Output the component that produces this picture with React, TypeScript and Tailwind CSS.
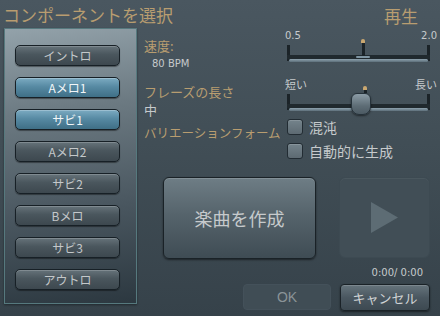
import React from "react"

const sections = [
  { label: "イントロ", active: false },
  { label: "Aメロ1", active: true },
  { label: "サビ1", active: true },
  { label: "Aメロ2", active: false },
  { label: "サビ2", active: false },
  { label: "Bメロ", active: false },
  { label: "サビ3", active: false },
  { label: "アウトロ", active: false },
]

const jp = "font-['Noto_Sans_CJK_JP','Noto_Sans',sans-serif]"
const num = "font-['DejaVu_Sans','Liberation_Sans',sans-serif]"

function SectionButton({ label, active }: { label: string; active: boolean }) {
  return (
    <button
      className={
        active
          ? "flex h-[21px] w-[105px] items-center justify-center rounded-[5px] border border-[#172026] bg-[linear-gradient(to_bottom,#7cabc2,#578aa3_45%,#3f6f86)] text-[12px] leading-none text-[#f2f6f8] shadow-[inset_0_1px_0_rgba(255,255,255,0.25),0_1px_1px_rgba(0,0,0,0.4)]"
          : "flex h-[21px] w-[105px] items-center justify-center rounded-[5px] border border-[#172026] bg-[linear-gradient(to_bottom,#66737a,#4a565d_45%,#3d484f)] text-[12px] leading-none text-[#c4c8ca] shadow-[inset_0_1px_0_rgba(255,255,255,0.18),0_1px_1px_rgba(0,0,0,0.4)]"
      }
    >
      {label}
    </button>
  )
}

function Slider({ pos, big }: { pos: number; big?: boolean }) {
  return (
    <div className="relative h-[22px] w-[143px] ml-[2px]">
      {/* end ticks */}
      <div className="absolute left-0 top-[3px] h-[16px] w-[3px] bg-[#1b2328]" />
      <div className="absolute right-0 top-[3px] h-[16px] w-[3px] bg-[#1b2328]" />
      {/* groove */}
      <div className="absolute left-0 right-0 top-[13px] h-[4px] bg-[#20292e]" />
      <div className="absolute left-[2px] right-[2px] top-[17px] h-[3px] rounded-full bg-[linear-gradient(to_bottom,#8ea2ae,#5d6f7a)]" />
      {/* thumb */}
      {big ? (
        <div className="absolute top-[-5px]" style={{ left: pos }}>
          <div className="mx-auto h-[4px] w-[4px] rounded-t-full bg-[#c9a770]" />
          <div className="mx-auto h-[3px] w-[3px] bg-[#1b2328]" />
          <div className="-ml-[8px] h-[22px] w-[20px] rounded-b-[8px] rounded-t-[6px] border border-[#26323a] bg-[linear-gradient(to_bottom,#8c9ca6,#5d6c75_60%,#4c5a63)] shadow-[0_1px_2px_rgba(0,0,0,0.5)]" />
        </div>
      ) : (
        <div className="absolute top-[-3px] flex flex-col items-center" style={{ left: pos }}>
          <div className="h-[4px] w-[4px] rounded-t-full bg-[#c9a770]" />
          <div className="h-[13px] w-[3px] bg-[#1b2328]" />
          <div className="h-[2px] w-[14px] rounded-full bg-[#7f95a2]" />
        </div>
      )}
    </div>
  )
}

function Checkbox({ label }: { label: string }) {
  return (
    <div className="flex h-[16px] items-center gap-[6px]">
      <div className="h-[16px] w-[16px] rounded-[3px] border border-[#222c33] bg-[linear-gradient(to_bottom,#74838b,#5d6a72)] shadow-[inset_0_1px_0_rgba(255,255,255,0.15)]" />
      <span className="text-[14px] leading-none text-[#c6cacc]">{label}</span>
    </div>
  )
}

export default function App() {
  return (
    <div
      className={`flex h-[316px] w-[440px] flex-col overflow-hidden bg-[linear-gradient(to_bottom,#4a5760,#414e56_45%,#36424a)] ${jp}`}
    >
      {/* header */}
      <div className="flex h-[28px] items-start justify-between pl-[3px] pr-[22px] pt-[5px]">
        <span className="text-[17px] leading-[20px] text-[#b89d70]">コンポーネントを選択</span>
        <span className="pt-[1px] text-[17px] leading-[20px] text-[#b89d70]">再生</span>
      </div>

      <div className="flex">
        {/* section list */}
        <div className="ml-[4px] flex h-[276px] w-[133px] flex-col items-start gap-[11px] border border-[#56797e] bg-[linear-gradient(172deg,#93a2aa_0%,#6c7a82_30%,#4a5760_65%,#2c3840_100%)] pl-[10px] pt-[16px] shadow-[0_1px_2px_rgba(0,0,0,0.4)]">
          {sections.map(s => (
            <SectionButton key={s.label} label={s.label} active={s.active} />
          ))}
        </div>

        {/* right side */}
        <div className="ml-[7px] flex w-[296px] flex-col">
          <div className="flex h-[149px]">
            {/* labels */}
            <div className="flex w-[141px] flex-col">
              <span className="mt-[11px] text-[13px] leading-[14px] text-[#b89d70]">速度:</span>
              <span className={`ml-[8px] mt-[5px] text-[10px] leading-[12px] text-[#c6cacc] ${num}`}>80 BPM</span>
              <span className="mt-[15px] text-[13px] leading-[14px] text-[#b89d70]">フレーズの長さ</span>
              <span className="mt-[4px] text-[13px] leading-[14px] text-[#c6cacc]">中</span>
              <span className="mt-[9px] text-[12.5px] leading-[14px] text-[#b89d70]">バリエーションフォーム</span>
            </div>

            {/* sliders + options */}
            <div className="flex w-[152px] flex-col">
              <div className={`mt-[2px] flex h-[12px] justify-between text-[10px] leading-[12px] text-[#c6cacc] ${num}`}>
                <span>0.5</span>
                <span>2.0</span>
              </div>
              <Slider pos={69} />
              <div className="mt-[13px] flex h-[14px] justify-between text-[11px] leading-[14px] text-[#c6cacc]">
                <span>短い</span>
                <span>長い</span>
              </div>
              <Slider pos={72} big />
              <div className="mt-[6px] flex flex-col gap-[8px] pl-[2px]">
                <Checkbox label="混沌" />
                <Checkbox label="自動的に生成" />
              </div>
            </div>
          </div>

          {/* create + play */}
          <div className="ml-[19px] flex gap-[23px]">
            <button className="flex h-[82px] w-[153px] items-center justify-center rounded-[6px] border border-[#1a2227] bg-[linear-gradient(to_bottom,#6e7d85,#56646c_45%,#3f4c54)] text-[18px] text-[#c6cacc] shadow-[inset_0_1px_0_rgba(255,255,255,0.15),0_1px_2px_rgba(0,0,0,0.5)]">
              楽曲を作成
            </button>
            <button className="flex h-[81px] w-[91px] items-center justify-center rounded-[6px] border border-[#3d4a52] bg-[#414e56] shadow-[inset_0_1px_0_rgba(255,255,255,0.05)]">
              <svg width="28" height="31" viewBox="0 0 28 31">
                <polygon points="0,0 27,15.5 0,31" fill="#5d6c74" />
              </svg>
            </button>
          </div>

          <div className={`mt-[8px] flex h-[12px] justify-end pr-[17px] text-[10px] leading-[12px] text-[#c6cacc] ${num}`}>
            0:00/ 0:00
          </div>

          <div className="mt-[5px] flex justify-end gap-[9px] pr-[10px]">
            <button className="flex h-[26px] w-[88px] items-center justify-center rounded-[4px] border border-[#44515a] bg-[#404d55] text-[14px] text-[#8a9397] font-['Liberation_Sans',sans-serif]">
              OK
            </button>
            <button className="flex h-[27px] w-[90px] items-center justify-center rounded-[4px] border border-[#1a2227] bg-[linear-gradient(to_bottom,#66747c,#4a5760_50%,#3d4951)] text-[13px] text-[#d0d3d5] shadow-[inset_0_1px_0_rgba(255,255,255,0.15),0_1px_2px_rgba(0,0,0,0.5)]">
              キャンセル
            </button>
          </div>
        </div>
      </div>
    </div>
  )
}
